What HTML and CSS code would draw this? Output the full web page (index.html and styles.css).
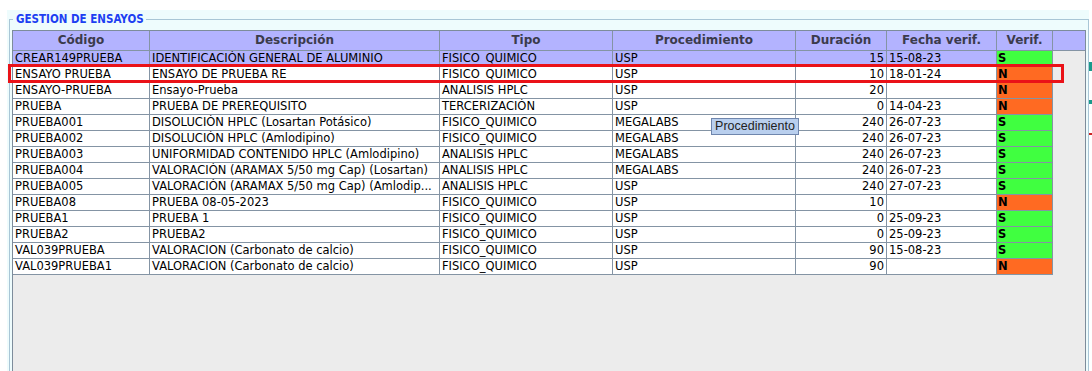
FILE: index.html
```html
<!DOCTYPE html>
<html lang="es">
<head>
<meta charset="utf-8">
<title>Gestion de ensayos</title>
<link rel="stylesheet" href="styles.css">
</head>
<body>
<div class="page">
  <div class="panel">
    <fieldset class="box">
      <legend class="legend">GESTION DE ENSAYOS</legend>
      <div class="grid">
        <div class="row head">
          <div class="cell">Código</div>
          <div class="cell">Descripción</div>
          <div class="cell">Tipo</div>
          <div class="cell">Procedimiento</div>
          <div class="cell">Duración</div>
          <div class="cell">Fecha verif.</div>
          <div class="cell">Verif.</div>
          <div class="cell filler"></div>
        </div>
        <div class="rows">
          <div class="row sel"><div class="cell">CREAR149PRUEBA</div><div class="cell">IDENTIFICACIÓN GENERAL DE ALUMINIO</div><div class="cell">FISICO_QUIMICO</div><div class="cell">USP</div><div class="cell num">15</div><div class="cell">15-08-23</div><div class="cell ok">S</div></div>
          <div class="row"><div class="cell">ENSAYO PRUEBA</div><div class="cell">ENSAYO DE PRUEBA RE</div><div class="cell">FISICO_QUIMICO</div><div class="cell">USP</div><div class="cell num">10</div><div class="cell">18-01-24</div><div class="cell no">N</div></div>
          <div class="row"><div class="cell">ENSAYO-PRUEBA</div><div class="cell">Ensayo-Prueba</div><div class="cell">ANALISIS HPLC</div><div class="cell">USP</div><div class="cell num">20</div><div class="cell"></div><div class="cell no">N</div></div>
          <div class="row"><div class="cell">PRUEBA</div><div class="cell">PRUEBA DE PREREQUISITO</div><div class="cell">TERCERIZACIÓN</div><div class="cell">USP</div><div class="cell num">0</div><div class="cell">14-04-23</div><div class="cell no">N</div></div>
          <div class="row"><div class="cell">PRUEBA001</div><div class="cell">DISOLUCIÓN HPLC (Losartan Potásico)</div><div class="cell">FISICO_QUIMICO</div><div class="cell">MEGALABS</div><div class="cell num">240</div><div class="cell">26-07-23</div><div class="cell ok">S</div></div>
          <div class="row"><div class="cell">PRUEBA002</div><div class="cell">DISOLUCIÓN HPLC (Amlodipino)</div><div class="cell">FISICO_QUIMICO</div><div class="cell">MEGALABS</div><div class="cell num">240</div><div class="cell">26-07-23</div><div class="cell ok">S</div></div>
          <div class="row"><div class="cell">PRUEBA003</div><div class="cell">UNIFORMIDAD CONTENIDO HPLC (Amlodipino)</div><div class="cell">ANALISIS HPLC</div><div class="cell">MEGALABS</div><div class="cell num">240</div><div class="cell">26-07-23</div><div class="cell ok">S</div></div>
          <div class="row"><div class="cell">PRUEBA004</div><div class="cell">VALORACIÓN (ARAMAX 5/50 mg Cap) (Losartan)</div><div class="cell">ANALISIS HPLC</div><div class="cell">MEGALABS</div><div class="cell num">240</div><div class="cell">26-07-23</div><div class="cell ok">S</div></div>
          <div class="row"><div class="cell">PRUEBA005</div><div class="cell">VALORACIÓN (ARAMAX 5/50 mg Cap) (Amlodip...</div><div class="cell">ANALISIS HPLC</div><div class="cell">USP</div><div class="cell num">240</div><div class="cell">27-07-23</div><div class="cell ok">S</div></div>
          <div class="row"><div class="cell">PRUEBA08</div><div class="cell">PRUEBA 08-05-2023</div><div class="cell">FISICO_QUIMICO</div><div class="cell">USP</div><div class="cell num">10</div><div class="cell"></div><div class="cell no">N</div></div>
          <div class="row"><div class="cell">PRUEBA1</div><div class="cell">PRUEBA 1</div><div class="cell">FISICO_QUIMICO</div><div class="cell">USP</div><div class="cell num">0</div><div class="cell">25-09-23</div><div class="cell ok">S</div></div>
          <div class="row"><div class="cell">PRUEBA2</div><div class="cell">PRUEBA2</div><div class="cell">FISICO_QUIMICO</div><div class="cell">USP</div><div class="cell num">0</div><div class="cell">25-09-23</div><div class="cell ok">S</div></div>
          <div class="row"><div class="cell">VAL039PRUEBA</div><div class="cell">VALORACION (Carbonato de calcio)</div><div class="cell">FISICO_QUIMICO</div><div class="cell">USP</div><div class="cell num">90</div><div class="cell">15-08-23</div><div class="cell ok">S</div></div>
          <div class="row"><div class="cell">VAL039PRUEBA1</div><div class="cell">VALORACION (Carbonato de calcio)</div><div class="cell">FISICO_QUIMICO</div><div class="cell">USP</div><div class="cell num">90</div><div class="cell"></div><div class="cell no">N</div></div>
        </div>
      </div>
    </fieldset>
  </div>
  <div class="side">
    <span class="mark teal m1"></span>
    <span class="mark teal m2"></span>
    <span class="mark red m3"></span>
  </div>
</div>
<div class="highlight"></div>
<div class="tooltip">Procedimiento</div>
</body>
</html>
```

FILE: styles.css
```css
html, body {
  margin: 0;
  padding: 0;
  background: #ffffff;
  overflow: hidden;
}
body {
  position: relative;
  width: 1092px;
  height: 371px;
  font-family: "DejaVu Sans", Verdana, sans-serif;
  font-size: 11.5px;
  color: #000;
}
.page {
  display: flex;
  align-items: flex-start;
  height: 371px;
  overflow: hidden;
}
.panel {
  margin-top: 10px;
  margin-left: 7px;
  width: 1082px;
  height: 361px;
  background: #eefcfd;
  padding: 3px 0 0 2px;
  box-sizing: border-box;
  overflow: hidden;
}
.box {
  margin: 0;
  border: 1px solid #a9c6d6;
  border-bottom: none;
  padding: 0 2px 0 2px;
  height: 380px;
  width: 1080px;
  box-sizing: border-box;
}
.legend {
  padding: 0 2px 0 3px;
  margin-left: 1px;
  font-family: "DejaVu Sans Condensed", "DejaVu Sans", sans-serif;
  font-stretch: condensed;
  font-weight: bold;
  font-size: 11.5px;
  line-height: 13px;
  color: #1c3ff2;
}
.grid {
  margin-top: 4px;
  width: 1074px;
  height: 360px;
  box-sizing: border-box;
  border: 1px solid #7d8c9b;
  background: #ececec;
}
.row {
  display: grid;
  grid-template-columns: 137px 290px 173px 183px 91px 110px 56px;
  height: 16px;
  box-sizing: border-box;
  border-bottom: 1px solid #8494a4;
  background: #ffffff;
  width: 1040px;
}
.row.head {
  grid-template-columns: 137px 290px 173px 183px 91px 110px 56px 32px;
  width: 1072px;
  height: 20px;
  background: #b3b3ff;
}
.row.sel {
  background: #b3b3ff;
}
.cell {
  box-sizing: border-box;
  border-right: 1px solid #8494a4;
  padding: 0 2px;
  line-height: 15px;
  white-space: nowrap;
  overflow: hidden;
}
.head .cell {
  text-align: center;
  font-weight: bold;
  font-size: 12px;
  line-height: 19px;
  color: #3b3b4c;
}
.head .filler {
  border-right: none;
}
.num {
  text-align: right;
}
.ok, .no {
  font-weight: bold;
  padding-left: 1px;
}
.ok {
  background: #40ff40;
}
.no {
  background: #ff6a22;
}
.side {
  width: 3px;
  height: 371px;
  display: flex;
  flex-direction: column;
}
.mark {
  display: block;
  width: 3px;
}
.teal {
  background: #1a9a8c;
}
.m1 {
  margin-top: 62px;
  height: 9px;
}
.m2 {
  margin-top: 29px;
  height: 4px;
}
.red {
  background: #cc2222;
}
.m3 {
  margin-top: 29px;
  height: 2px;
}
.highlight {
  position: absolute;
  left: 8px;
  top: 64px;
  width: 1056px;
  height: 19px;
  box-sizing: border-box;
  border: 3px solid #ea1218;
}
.tooltip {
  position: absolute;
  left: 711px;
  top: 118px;
  width: 88px;
  height: 17px;
  box-sizing: border-box;
  border: 1px solid #6f86ad;
  background: #b9cfee;
  font-family: "Liberation Sans", Arial, sans-serif;
  font-size: 12.5px;
  line-height: 15px;
  text-align: center;
  color: #222;
}
```
